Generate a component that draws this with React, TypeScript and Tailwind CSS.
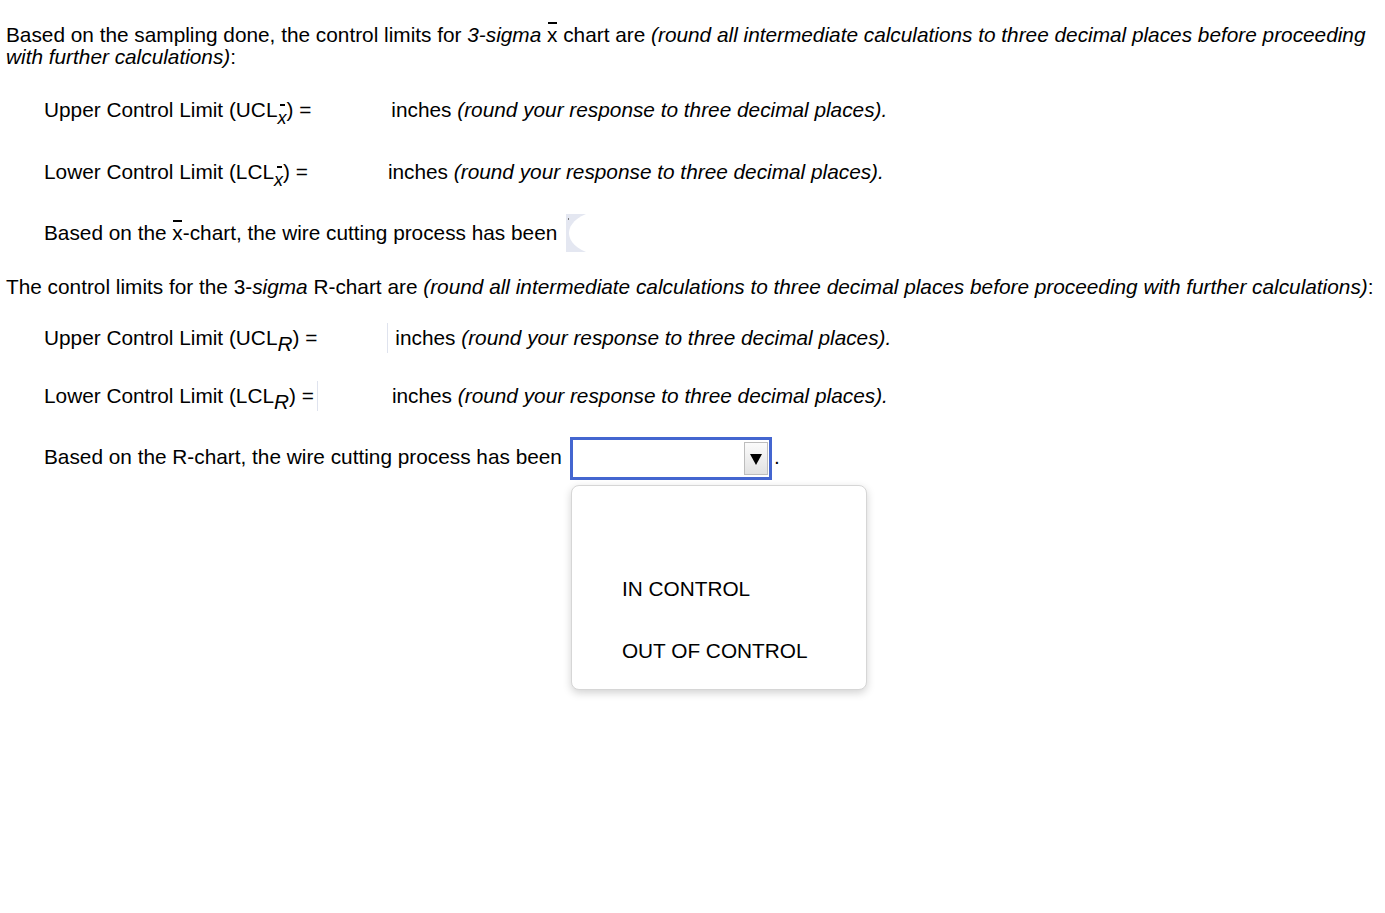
import React from "react";

const font = { fontFamily: '"Liberation Sans", Arial, Helvetica, sans-serif' };

function XBar() {
  return (
    <span className="relative inline-block">
      <span className="absolute left-[1px] top-[-2px] h-[2px] w-[9px] bg-black" />
      x
    </span>
  );
}

function SubX() {
  return (
    <span className="relative top-[7px] inline-block text-[18px] italic leading-none">
      <span className="absolute left-[3px] top-[-5px] h-[2px] w-[5px] bg-black" />
      x
    </span>
  );
}

function SubR() {
  return <span className="relative top-[6px] inline-block italic leading-none">R</span>;
}

function FaintCombo() {
  return (
    <svg width="20" height="38" viewBox="0 0 20 38" className="inline-block align-middle">
      <rect x="0" y="0" width="20" height="38" fill="#e4e7f1" />
      <path d="M20 0 C6 6 3 14 3 19 C3 24 6 32 20 38 Z" fill="#ffffff" />
      <rect x="2" y="4" width="1" height="2" fill="#777" />
    </svg>
  );
}

function Select() {
  return (
    <span className="relative inline-flex h-[43px] w-[202px] items-center justify-end border-[3px] border-[#4466d0] bg-white pr-[1px] align-middle">
      <span className="flex h-[33px] w-[24px] items-center justify-center border border-[#bdbdbd] bg-gradient-to-b from-[#fbfbfb] to-[#e2e2e2]">
        <svg width="14" height="14" viewBox="0 0 14 14">
          <path d="M1 2 H13 L7 13 Z" fill="#000" />
        </svg>
      </span>
    </span>
  );
}

export default function App() {
  return (
    <div className="min-h-screen bg-white text-[20.8px] leading-[22px] text-black" style={font}>
      <div className="px-[6px] pt-[24px]">
        <p>
          Based on the sampling done, the control limits for <i>3-sigma</i> <XBar /> chart are{" "}
          <i>(round all intermediate calculations to three decimal places before proceeding with further calculations)</i>:
        </p>

        <div className="pl-[38px]">
          <div className="mt-[27px] flex h-[30px] items-center">
            <span>
              Upper Control Limit (UCL<SubX />) =
            </span>
            <span className="w-[80px]" />
            <span>
              inches <i>(round your response to three decimal places).</i>
            </span>
          </div>

          <div className="mt-[32px] flex h-[30px] items-center">
            <span>
              Lower Control Limit (LCL<SubX />) =
            </span>
            <span className="w-[80px]" />
            <span>
              inches <i>(round your response to three decimal places).</i>
            </span>
          </div>

          <div className="mt-[27px] flex h-[38px] items-center">
            <span>
              Based on the <XBar />-chart, the wire cutting process has been
            </span>
            <span className="ml-[9px]">
              <FaintCombo />
            </span>
          </div>
        </div>

        <p className="mt-[24px]">
          The control limits for the 3-<i>sigma</i> R-chart are{" "}
          <i>(round all intermediate calculations to three decimal places before proceeding with further calculations)</i>:
        </p>

        <div className="pl-[38px]">
          <div className="mt-[25px] flex h-[30px] items-center">
            <span>
              Upper Control Limit (UCL<SubR />) =
            </span>
            <span className="w-[70px]" />
            <span className="h-[30px] w-px bg-[#dfe3ee]" />
            <span className="ml-[7px]">
              inches <i>(round your response to three decimal places).</i>
            </span>
          </div>

          <div className="mt-[28px] flex h-[30px] items-center">
            <span>
              Lower Control Limit (LCL<SubR />) =
            </span>
            <span className="ml-[3px] h-[30px] w-px bg-[#dfe3ee]" />
            <span className="w-[74px]" />
            <span>
              inches <i>(round your response to three decimal places).</i>
            </span>
          </div>

          <div className="mt-[24px] flex items-center">
            <span>Based on the R-chart, the wire cutting process has been</span>
            <span className="relative top-[2px] ml-[8px]">
              <Select />
              <div className="absolute left-[1px] top-[48px] z-10 h-[205px] w-[296px] rounded-[8px] border border-[#d6d6d6] bg-white shadow-[0_3px_8px_rgba(0,0,0,0.18)]">
                <div className="pl-[50px] pt-[92px] leading-[22px]">IN CONTROL</div>
                <div className="mt-[40px] pl-[50px] leading-[22px]">OUT OF CONTROL</div>
              </div>
            </span>
            <span className="ml-[2px]">.</span>
          </div>
        </div>
      </div>
    </div>
  );
}
